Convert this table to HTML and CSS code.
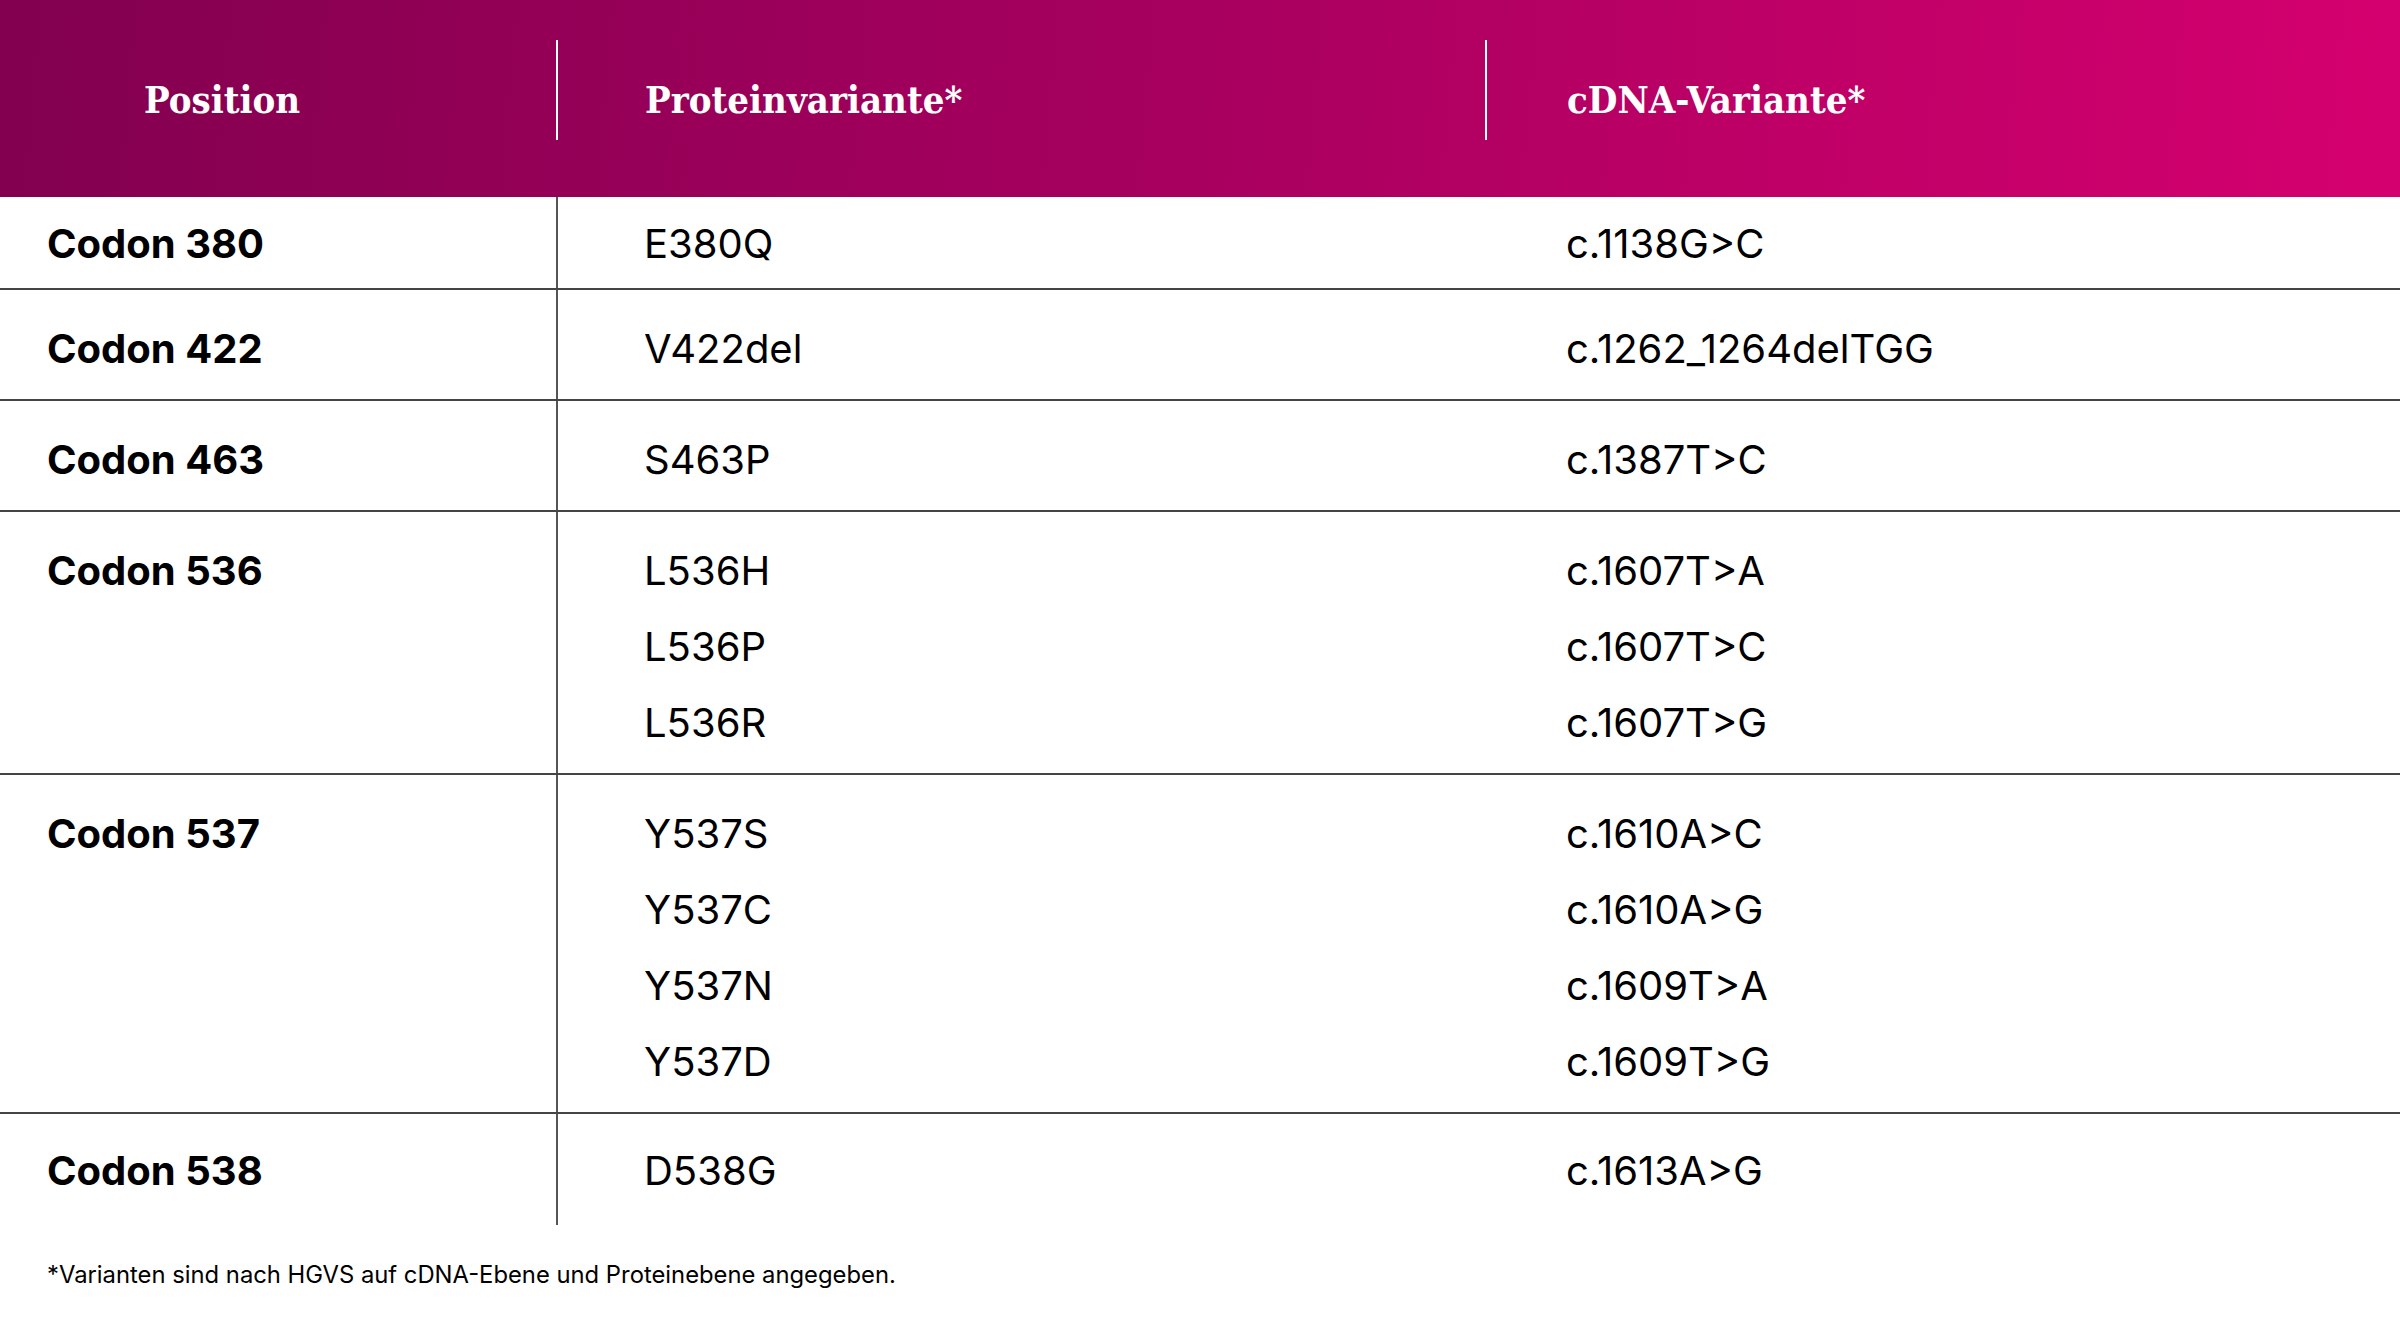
FILE: index.html
```html
<!DOCTYPE html>
<html lang="de">
<head>
<meta charset="utf-8">
<title>Varianten</title>
<link rel="stylesheet" href="styles.css">
</head>
<body>
<div class="table">
  <div class="head">
    <div class="hcell hpos">Position</div>
    <div class="hcell hprot">Proteinvariante*</div>
    <div class="hcell hcdna">cDNA-Variante*</div>
  </div>
  <div class="row first">
    <div class="cell pos">Codon 380</div>
    <div class="cell prot"><div>E380Q</div></div>
    <div class="cell cdna"><div>c.1138G&gt;C</div></div>
  </div>
  <div class="row">
    <div class="cell pos">Codon 422</div>
    <div class="cell prot"><div>V422del</div></div>
    <div class="cell cdna"><div>c.1262_1264delTGG</div></div>
  </div>
  <div class="row">
    <div class="cell pos">Codon 463</div>
    <div class="cell prot"><div>S463P</div></div>
    <div class="cell cdna"><div>c.1387T&gt;C</div></div>
  </div>
  <div class="row">
    <div class="cell pos">Codon 536</div>
    <div class="cell prot"><div>L536H</div><div>L536P</div><div>L536R</div></div>
    <div class="cell cdna"><div>c.1607T&gt;A</div><div>c.1607T&gt;C</div><div>c.1607T&gt;G</div></div>
  </div>
  <div class="row">
    <div class="cell pos">Codon 537</div>
    <div class="cell prot"><div>Y537S</div><div>Y537C</div><div>Y537N</div><div>Y537D</div></div>
    <div class="cell cdna"><div>c.1610A&gt;C</div><div>c.1610A&gt;G</div><div>c.1609T&gt;A</div><div>c.1609T&gt;G</div></div>
  </div>
  <div class="row last">
    <div class="cell pos">Codon 538</div>
    <div class="cell prot"><div>D538G</div></div>
    <div class="cell cdna"><div>c.1613A&gt;G</div></div>
  </div>
</div>
<p class="note">*Varianten sind nach HGVS auf cDNA-Ebene und Proteinebene angegeben.</p>
</body>
</html>
```

FILE: styles.css
```css
* { box-sizing: border-box; }
html, body {
  margin: 0;
  padding: 0;
  background: #ffffff;
  width: 2400px;
}
body {
  font-family: Inter, "Liberation Sans", sans-serif;
  color: #000;
}
.head {
  display: grid;
  grid-template-columns: 556px 929px 1fr;
  align-items: start;
  height: 197px;
  background: linear-gradient(95deg, #82004f 0%, #a8005f 50%, #d5006f 100%);
}
.hcell {
  font-family: "DejaVu Serif Condensed", "DejaVu Serif", serif;
  font-stretch: condensed;
  font-weight: bold;
  font-size: 38px;
  color: #ffffff;
  margin-top: 40px;
  height: 100px;
  padding-top: 18px;
  display: flex;
  align-items: center;
}
.hpos { padding-left: 144px; }
.hprot { padding-left: 87px; border-left: 2px solid #ffffff; }
.hcdna { padding-left: 80px; border-left: 2px solid #ffffff; }
.row {
  display: grid;
  grid-template-columns: 558px 1008px 1fr;
  border-bottom: 2px solid #444444;
}
.row.last { border-bottom: none; }
.cell {
  font-size: 40px;
  line-height: 76px;
  padding-top: 21px;
  padding-bottom: 12px;
}
.row.first .cell { padding-top: 9px; padding-bottom: 6px; }
.row.last .cell { padding-top: 19px; padding-bottom: 16px; }
.pos {
  font-weight: 700;
  padding-left: 47px;
  border-right: 2px solid #555555;
}
.prot { padding-left: 86px; }
.cdna { padding-left: 0; }
.note {
  margin: 33px 0 0 47px;
  font-size: 23.8px;
  line-height: 34px;
}
```
